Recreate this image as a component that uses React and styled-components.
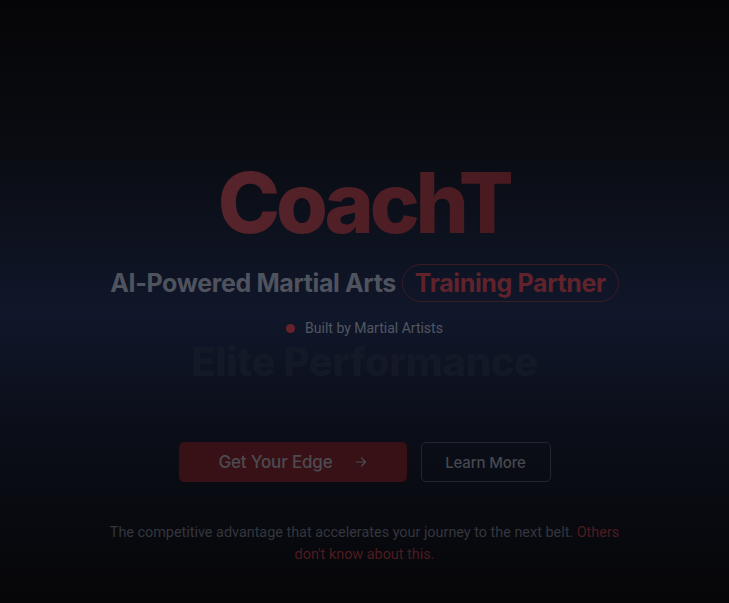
import React from "react";
import styled, { createGlobalStyle } from "styled-components";

const GlobalStyle = createGlobalStyle`
  html, body {
    margin: 0;
    padding: 0;
    background: #050507;
  }
  * {
    box-sizing: border-box;
  }
`;

const Hero = styled.main`
  min-height: 603px;
  display: flex;
  flex-direction: column;
  align-items: center;
  padding-top: 161px;
  background: linear-gradient(
    to bottom,
    #050507 0%,
    #0a0c12 25%,
    #10172a 52%,
    #0b0e18 72%,
    #060608 100%
  );
  font-family: Inter, "Noto Sans", sans-serif;
`;

const Brand = styled.h1`
  margin: 0;
  font-size: 84px;
  line-height: 1;
  font-weight: 800;
  letter-spacing: -0.05em;
  background: linear-gradient(90deg, #57242b, #481a20);
  -webkit-background-clip: text;
  background-clip: text;
  color: transparent;
`;

const Tagline = styled.div`
  margin-top: 19px;
  display: flex;
  align-items: center;
  gap: 6px;
  font-size: 25px;
  font-weight: 700;
  letter-spacing: -0.015em;
  color: #4f535e;
`;

const Pill = styled.span`
  display: inline-flex;
  align-items: center;
  height: 38px;
  padding: 0 12px;
  border: 1px solid #381c24;
  border-radius: 19px;
  color: #60232c;
`;

const Badge = styled.div`
  margin-top: 18px;
  display: flex;
  align-items: center;
  gap: 10px;
  font-family: Roboto, "Noto Sans", sans-serif;
  font-size: 14px;
  color: #525664;
`;

const Dot = styled.span`
  width: 9px;
  height: 9px;
  border-radius: 50%;
  background: #66222d;
`;

const Ghost = styled.div`
  margin-top: 1px;
  font-size: 40px;
  font-weight: 800;
  letter-spacing: -0.01em;
  color: #131927;
`;

const Actions = styled.div`
  margin-top: 56px;
  display: flex;
  gap: 14px;
`;

const Button = styled.button`
  height: 40px;
  display: inline-flex;
  align-items: center;
  justify-content: center;
  gap: 22px;
  border-radius: 5px;
  font-family: Inter, "Noto Sans", sans-serif;
  font-size: ${(p) => (p.$primary ? "17px" : "15px")};
  font-weight: 500;
  letter-spacing: -0.01em;
  cursor: pointer;
  width: ${(p) => (p.$primary ? "228px" : "130px")};
  background: ${(p) => (p.$primary ? "#371116" : "transparent")};
  border: 1px solid ${(p) => (p.$primary ? "#371116" : "#23262e")};
  color: ${(p) => (p.$primary ? "#4d4b51" : "#46484f")};
`;

const Arrow = styled.svg`
  width: 12px;
  height: 12px;
`;

const Blurb = styled.p`
  margin: 40px 0 0;
  max-width: 530px;
  text-align: center;
  font-family: Roboto, "Noto Sans", sans-serif;
  font-size: 14.4px;
  line-height: 22px;
  color: #34363e;
`;

const Accent = styled.span`
  color: #4e1b20;
`;

export default function App() {
  return (
    <>
      <GlobalStyle />
      <Hero>
        <Brand>CoachT</Brand>
        <Tagline>
          AI-Powered Martial Arts
          <Pill>Training Partner</Pill>
        </Tagline>
        <Badge>
          <Dot />
          Built by Martial Artists
        </Badge>
        <Ghost>Elite Performance</Ghost>
        <Actions>
          <Button $primary>
            Get Your Edge
            <Arrow viewBox="0 0 12 12" fill="none" stroke="#4d4b51" strokeWidth="1.2" strokeLinecap="round" strokeLinejoin="round">
              <path d="M1.5 6h9M6.5 2l4 4-4 4" />
            </Arrow>
          </Button>
          <Button>Learn More</Button>
        </Actions>
        <Blurb>
          The competitive advantage that accelerates your journey to the next belt.{" "}
          <Accent>Others don't know about this.</Accent>
        </Blurb>
      </Hero>
    </>
  );
}
